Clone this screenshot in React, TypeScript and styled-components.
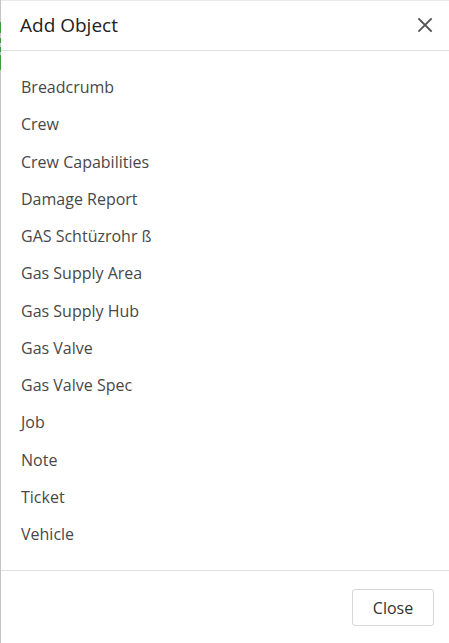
import React from 'react';
import styled, { createGlobalStyle } from 'styled-components';

const items = [
  'Breadcrumb',
  'Crew',
  'Crew Capabilities',
  'Damage Report',
  'GAS Schtüzrohr ß',
  'Gas Supply Area',
  'Gas Supply Hub',
  'Gas Valve',
  'Gas Valve Spec',
  'Job',
  'Note',
  'Ticket',
  'Vehicle',
];

const App = () => {
  return (
    <>
      <GlobalStyle />
      <Page>
        <Edge>
          <EdgeMark $top={22} $height={11} />
          <EdgeMark $top={38} $height={5} />
          <EdgeMark $top={47} $height={5} />
          <EdgeMark $top={55} $height={15} />
        </Edge>
        <Dialog>
          <Header>
            <Title>Add Object</Title>
            <CloseIcon aria-label="Close">
              <svg width="16" height="16" viewBox="0 0 16 16">
                <path
                  d="M2 2 L14 14 M14 2 L2 14"
                  stroke="#555"
                  strokeWidth="1.8"
                  strokeLinecap="square"
                />
              </svg>
            </CloseIcon>
          </Header>
          <List>
            {items.map((item) => (
              <Item key={item}>{item}</Item>
            ))}
          </List>
          <Footer>
            <Button>Close</Button>
          </Footer>
        </Dialog>
      </Page>
    </>
  );
};

export default App;

const GlobalStyle = createGlobalStyle`
  html, body {
    margin: 0;
    padding: 0;
    background: #ffffff;
  }
  body {
    font-family: "Open Sans", "Noto Sans", sans-serif;
    color: #333;
  }
`;

const Page = styled.div`
  display: flex;
  width: 449px;
  height: 643px;
  overflow: hidden;
`;

const Edge = styled.div`
  position: relative;
  width: 1px;
  flex-shrink: 0;
  background: #c4c4c4;
`;

const EdgeMark = styled.div<{ $top: number; $height: number }>`
  position: absolute;
  left: 0;
  width: 1px;
  top: ${(p) => p.$top}px;
  height: ${(p) => p.$height}px;
  background: #3d9a3d;
`;

const Dialog = styled.div`
  flex: 1;
  display: flex;
  flex-direction: column;
  background: #fff;
  border-top: 1px solid #eaeaea;
`;

const Header = styled.div`
  display: flex;
  align-items: center;
  justify-content: space-between;
  height: 50px;
  padding: 0 16px 0 19px;
  border-bottom: 1px solid #dedede;
  box-sizing: border-box;
`;

const Title = styled.div`
  font-size: 19px;
  color: #222;
  margin-top: -1px;
`;

const CloseIcon = styled.div`
  display: flex;
  align-items: center;
  justify-content: center;
  width: 16px;
  height: 16px;
  margin-top: -2px;
`;

const List = styled.div`
  flex: 1;
  display: flex;
  flex-direction: column;
  padding: 18px 20px 0;
`;

const Item = styled.div`
  font-size: 16px;
  line-height: 37.25px;
  color: #484848;
`;

const Footer = styled.div`
  display: flex;
  justify-content: flex-end;
  align-items: flex-start;
  height: 73px;
  padding: 18px 15px 0;
  border-top: 1px solid #dedede;
  box-sizing: border-box;
`;

const Button = styled.button`
  font-family: "Open Sans", "Noto Sans", sans-serif;
  font-size: 16px;
  color: #333;
  background: #fff;
  border: 1px solid #d6d6d6;
  border-radius: 3px;
  width: 82px;
  height: 37px;
  padding: 0;
`;
